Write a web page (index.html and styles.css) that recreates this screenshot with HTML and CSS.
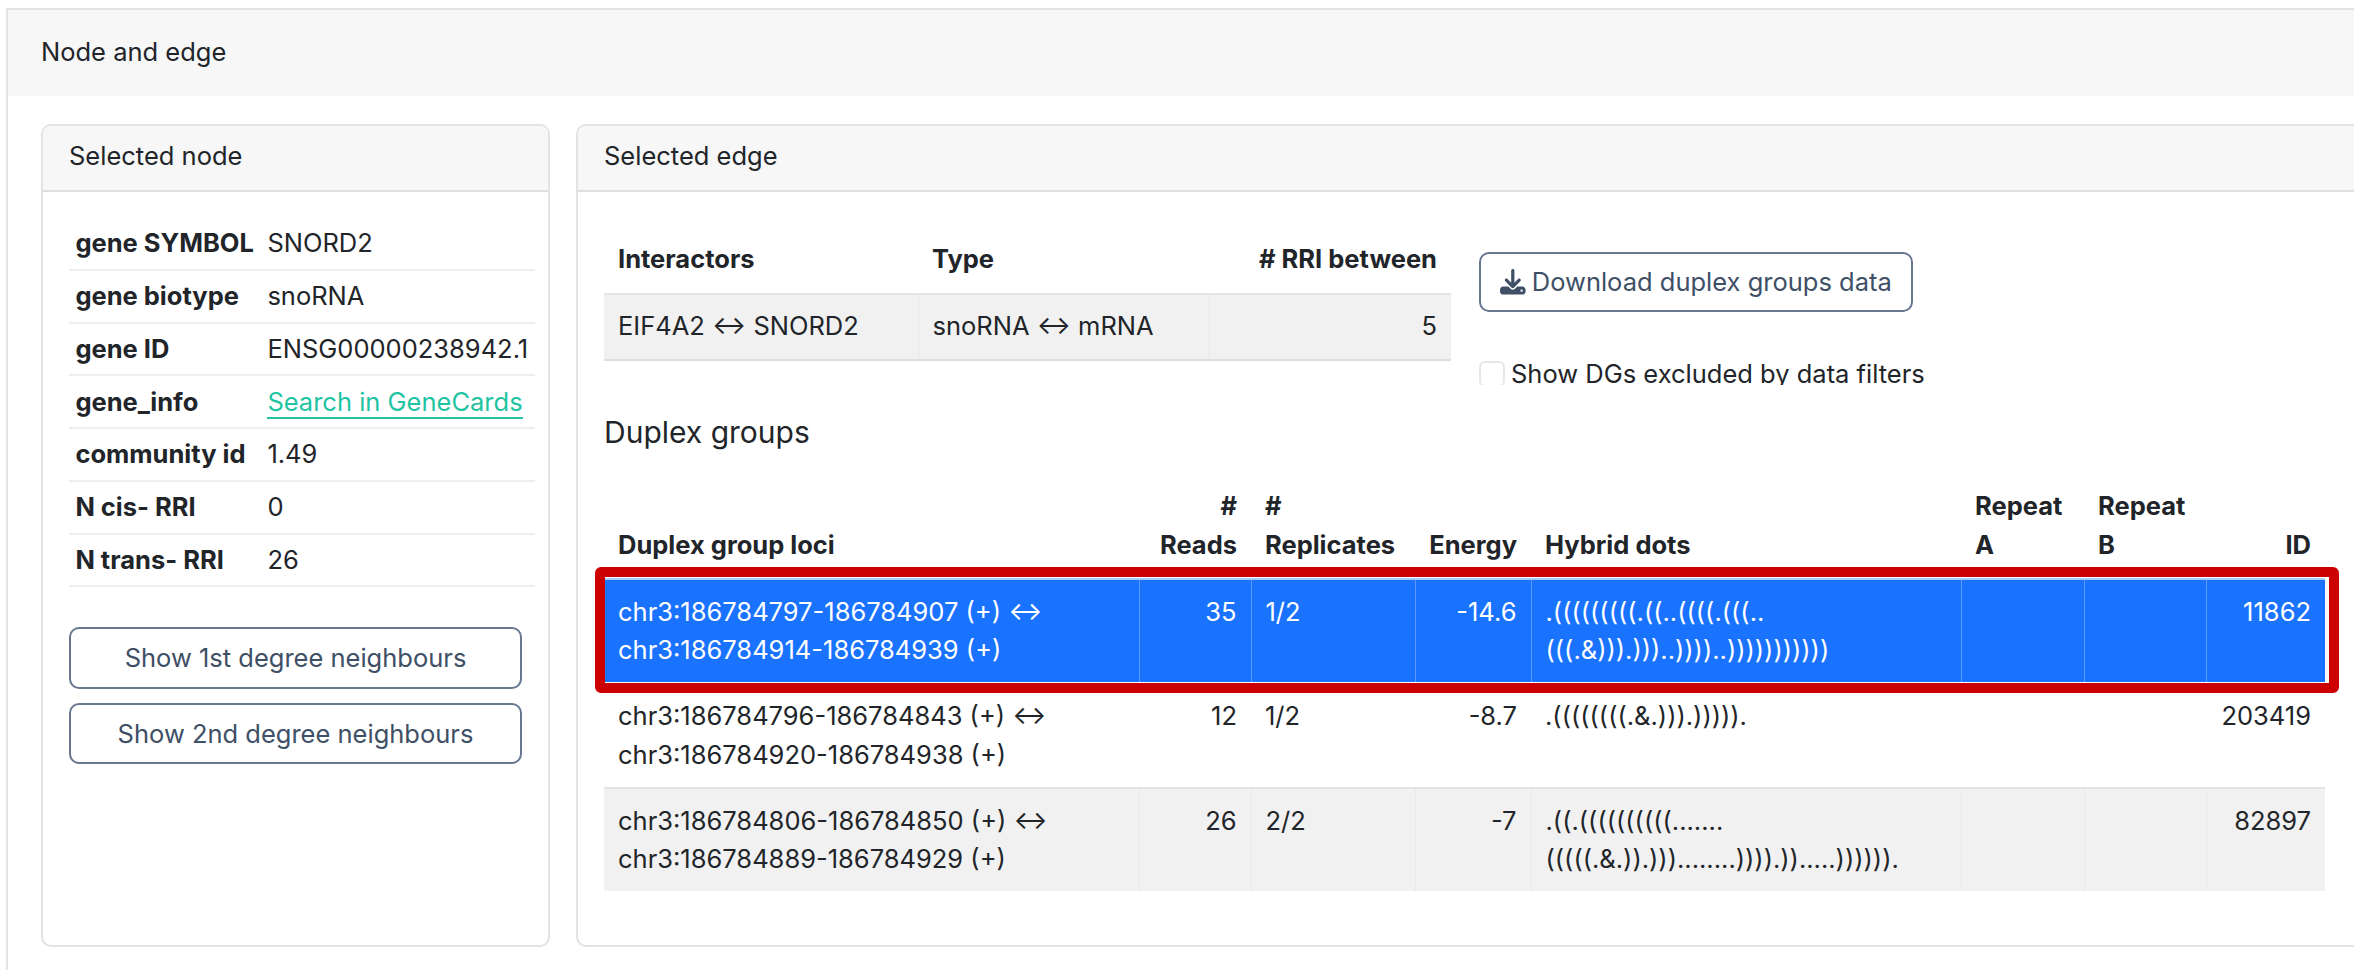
FILE: index.html
```html
<!DOCTYPE html>
<html lang="en">
<head>
<meta charset="utf-8">
<title>Node and edge</title>
<link rel="stylesheet" href="styles.css">
</head>
<body>
<section class="outer">
  <header class="outer-head">Node and edge</header>
  <div class="outer-body">
    <article class="card node-card">
      <header class="card-head">Selected node</header>
      <div class="node-body">
        <table class="info">
          <tr><th>gene SYMBOL</th><td>SNORD2</td></tr>
          <tr><th>gene biotype</th><td>snoRNA</td></tr>
          <tr><th>gene ID</th><td>ENSG00000238942.1</td></tr>
          <tr><th>gene_info</th><td><a href="#">Search in GeneCards</a></td></tr>
          <tr><th>community id</th><td>1.49</td></tr>
          <tr><th>N cis- RRI</th><td>0</td></tr>
          <tr><th>N trans- RRI</th><td>26</td></tr>
        </table>
        <button class="btn btn-wide first">Show 1st degree neighbours</button>
        <button class="btn btn-wide second">Show 2nd degree neighbours</button>
      </div>
    </article>
    <article class="card edge-card">
      <header class="card-head">Selected edge</header>
      <div class="edge-body">
        <div class="edge-top">
          <table class="grid summary">
            <thead><tr><th class="c1">Interactors</th><th class="c2">Type</th><th class="num">&#35; RRI between</th></tr></thead>
            <tbody><tr class="odd"><td>EIF4A2 ↔ SNORD2</td><td>snoRNA ↔ mRNA</td><td class="num">5</td></tr></tbody>
          </table>
          <div class="edge-actions">
            <button class="btn btn-dl">
              <svg class="dl-icon" viewBox="0 0 512 512" aria-hidden="true"><path fill="currentColor" d="M288 32c0-17.700-14.300-32-32-32s-32 14.300-32 32V274.700l-73.400-73.400c-12.500-12.500-32.800-12.500-45.300 0s-12.500 32.800 0 45.300l128 128c12.500 12.500 32.800 12.500 45.300 0l128-128c12.500-12.500 12.500-32.800 0-45.300s-32.800-12.500-45.300 0L288 274.700V32zM64 352c-35.300 0-64 28.700-64 64v32c0 35.300 28.700 64 64 64H448c35.300 0 64-28.700 64-64V416c0-35.300-28.700-64-64-64H346.500l-45.300 45.300c-25 25-65.500 25-90.500 0L165.500 352H64zm368 56a24 24 0 1 1 0 48 24 24 0 1 1 0-48z"/></svg>
              <span>Download duplex groups data</span>
            </button>
            <label class="check"><span class="box"></span><span>Show DGs excluded by data filters</span></label>
          </div>
        </div>
        <h5 class="dg-title">Duplex groups</h5>
        <div class="dg-wrap">
          <table class="grid dg">
            <colgroup><col class="w-loci"><col class="w-reads"><col class="w-rep"><col class="w-en"><col class="w-dots"><col class="w-ra"><col class="w-rb"><col class="w-id"></colgroup>
            <thead><tr>
              <th>Duplex group loci</th><th class="num"># Reads</th><th># Replicates</th><th class="num">Energy</th><th>Hybrid dots</th><th>Repeat A</th><th>Repeat B</th><th class="num">ID</th>
            </tr></thead>
            <tbody>
              <tr class="sel">
                <td>chr3:186784797-186784907 (+) ↔ chr3:186784914-186784939 (+)</td><td class="num">35</td><td>1/2</td><td class="num">-14.6</td><td>.(((((((((.((..((((.(((..(((.&amp;))).)))..))))..)))))))))))</td><td></td><td></td><td class="num">11862</td>
              </tr>
              <tr>
                <td>chr3:186784796-186784843 (+) ↔ chr3:186784920-186784938 (+)</td><td class="num">12</td><td>1/2</td><td class="num">-8.7</td><td>.((((((((.&amp;.))).))))).</td><td></td><td></td><td class="num">203419</td>
              </tr>
              <tr class="odd">
                <td>chr3:186784806-186784850 (+) ↔ chr3:186784889-186784929 (+)</td><td class="num">26</td><td>2/2</td><td class="num">-7</td><td>.((.((((((((((.......(((((.&amp;.)).)))........)))).)).....)))))).</td><td></td><td></td><td class="num">82897</td>
              </tr>
            </tbody>
          </table>
          <div class="sel-frame"></div>
        </div>
      </div>
    </article>
  </div>
</section>
</body>
</html>
```
FILE: styles.css
```css
* { box-sizing: border-box; }
html, body { margin: 0; height: 970px; overflow: hidden; background: #fff; }
body { font-family: Inter, "Liberation Sans", sans-serif; font-size: 25.5px; line-height: 38.4px; color: #212529; padding: 8px 0 0 6px; }
.outer { width: 2420px; height: 1000px; border: 2px solid #e4e4e4; border-right: 0; border-bottom: 0; }
.outer-head { height: 86px; background: #f7f7f7; padding: 23px 33px 0; }
.outer-body { display: flex; gap: 26px; padding: 28px 33px; }
.card { border: 2px solid #e2e3e5; border-radius: 10px; height: 823px; overflow: hidden; }
.node-card { width: 509px; flex: none; }
.edge-card { flex: 1; }
.card-head { height: 66px; background: #f7f7f7; border-bottom: 2px solid #dfdfdf; padding: 11px 26px 0; }
.node-body { padding: 26px 26px; }
.info { border-collapse: collapse; width: 466px; }
.info th, .info td { padding: 6.200px 6.400px; text-align: left; border-bottom: 2px solid #eceef1; white-space: nowrap; vertical-align: middle; }
.info th { font-weight: 700; width: 192px; }
.info a { color: #1fc4a3; text-decoration: none; border-bottom: 2px solid #1fc4a3; }
.btn { font: inherit; color: #3e4f66; background: #fff; border: 2px solid #66778f; border-radius: 10px; line-height: 36px; }
.btn-wide { display: block; width: 453px; }
.first { height: 62px; margin-top: 40px; }
.second { height: 61px; margin-top: 14px; }
.edge-body { padding: 0 26px; }
.edge-top { display: flex; gap: 28px; height: 223.500px; }
.grid { border-collapse: collapse; table-layout: fixed; }
.grid th { font-weight: 700; text-align: left; vertical-align: bottom; padding: 11.800px 14px 13.800px; }
.grid td { padding: 12.800px 14px; vertical-align: top; }
.grid .num { text-align: right; }
.summary { width: 847px; margin-top: 36.500px; align-self: flex-start; }
.summary .c1 { width: 314px; }
.summary .c2 { width: 291px; }
.odd td { background: #f1f1f2; border-top: 2px solid #e2e4e8; }
.odd td + td { border-left: 1px solid #e8e8ea; }
.summary .odd td { border-bottom: 2px solid #dcdee2; }
.edge-actions { width: 480px; padding-top: 60px; }
.btn-dl { display: flex; align-items: center; gap: 6px; height: 60px; padding: 0 19.200px; white-space: nowrap; }
.dl-icon { width: 25.600px; height: 25.600px; flex: none; }
.check { display: flex; gap: 6px; height: 24px; margin-top: 49px; overflow: hidden; line-height: 26px; }
.box { width: 26px; height: 26px; border: 2px solid #e6e7e9; border-radius: 6px; flex: none; }
.dg-title { font-size: 30px; font-weight: 400; line-height: 36px; margin: -1.500px 0 0; }
.dg-wrap { position: relative; margin-top: 25.500px; width: 1721px; }
.dg { width: 1721px; }
.w-loci { width: 535px; }
.w-reads { width: 112px; }
.w-rep { width: 164px; }
.w-en { width: 116px; }
.w-dots { width: 430px; }
.w-ra { width: 123px; }
.w-rb { width: 122px; }
.w-id { width: 119px; }
.dg td { border-top: 2px solid #fff; overflow-wrap: anywhere; }
.dg .odd td { border-top-color: #e2e4e8; }
.dg .sel td { background: #1a73ff; color: #fff; border-top-color: #a8cbff; border-left: 1px solid #5b99ff; }
.dg .sel td:first-child { border-left: 0; }
.sel-frame { position: absolute; left: -9px; right: -14px; top: 91px; height: 126px; border: 10px solid #cc0000; border-radius: 6px; pointer-events: none; }
```
